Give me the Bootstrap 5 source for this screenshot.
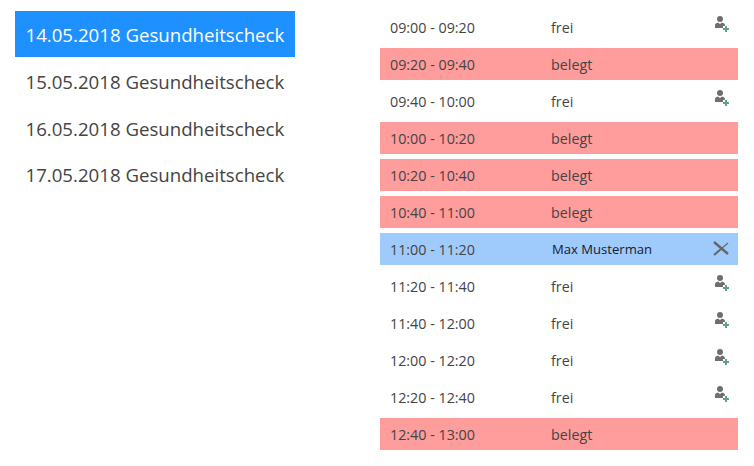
<!DOCTYPE html>
<html lang="de">
<head>
<meta charset="utf-8">
<title>Termine</title>
<link href="https://cdn.jsdelivr.net/npm/bootstrap@5.3.0/dist/css/bootstrap.min.css" rel="stylesheet">
<style>
body { font-family: "Open Sans", "Noto Sans", sans-serif; color: #444; background: #fff; }
.page-wrap { padding: 11px 16px 0 15px; gap: 85px; }
.day-col { width: 280px; flex: none; }
.day-item { height: 46.7px; padding: 2px 0 0 10.5px; font-size: 18.65px; color: #444; text-decoration: none; display: flex; align-items: center; white-space: nowrap; }
.day-item.chosen { background: #1e90ff; color: #fff; height: 46px; margin-bottom: .7px; }
.slot-col { flex: 1 1 auto; gap: 5px; }
.slot-row { height: 32px; font-size: 14.3px; line-height: 34px; position: relative; }
.slot-time { width: 171px; padding-left: 10px; flex: none; }
.slot-state { flex: 1 1 auto; }
.slot-taken { background: #ff9c9c; }
.slot-mine { background: #9fcafc; }
.slot-name { font-size: 13.1px; color: #1a1a2a; padding-left: 1px; line-height: 32px; }
.slot-icon { width: 18px; height: 18px; position: absolute; right: 7px; top: 4px; }
.slot-x { top: 7px; right: 8px; }
</style>
</head>
<body>
<svg width="0" height="0" class="d-block" aria-hidden="true">
<defs>
<symbol id="add-user" viewBox="0 0 18 18">
<circle cx="7" cy="4" r="3" fill="#6f6f6f"/>
<path d="M2 13V10.500C2 8.800 3.200 7.900 5 7.500L7 9L9 7.500C10.800 7.900 12 8.800 12 10.500V11H10V13Z" fill="#6f6f6f"/>
<path d="M12 11h2v2h2v2h-2v2h-2v-2h-2v-2h2z" fill="#5fa08e"/>
</symbol>
</defs>
</svg>
<div class="d-flex page-wrap">
  <div class="day-col">
    <a class="day-item chosen" href="#">14.05.2018 Gesundheitscheck</a>
    <a class="day-item" href="#">15.05.2018 Gesundheitscheck</a>
    <a class="day-item" href="#">16.05.2018 Gesundheitscheck</a>
    <a class="day-item" href="#">17.05.2018 Gesundheitscheck</a>
  </div>
  <div class="d-flex flex-column slot-col">
    <div class="d-flex slot-row"><span class="slot-time">09:00 - 09:20</span><span class="slot-state">frei</span><svg class="slot-icon"><use href="#add-user"/></svg></div>
    <div class="d-flex slot-row slot-taken"><span class="slot-time">09:20 - 09:40</span><span class="slot-state">belegt</span></div>
    <div class="d-flex slot-row"><span class="slot-time">09:40 - 10:00</span><span class="slot-state">frei</span><svg class="slot-icon"><use href="#add-user"/></svg></div>
    <div class="d-flex slot-row slot-taken"><span class="slot-time">10:00 - 10:20</span><span class="slot-state">belegt</span></div>
    <div class="d-flex slot-row slot-taken"><span class="slot-time">10:20 - 10:40</span><span class="slot-state">belegt</span></div>
    <div class="d-flex slot-row slot-taken"><span class="slot-time">10:40 - 11:00</span><span class="slot-state">belegt</span></div>
    <div class="d-flex slot-row slot-mine"><span class="slot-time">11:00 - 11:20</span><span class="slot-state slot-name">Max Musterman</span>
      <svg class="slot-icon slot-x" viewBox="0 0 18 18"><path d="M2 2L16 14" stroke="#666" stroke-width="2.400"/><path d="M2 15L9 9" stroke="#666" stroke-width="2.200"/><path d="M9 9L16 3" stroke="#666" stroke-width="1.100"/></svg></div>
    <div class="d-flex slot-row"><span class="slot-time">11:20 - 11:40</span><span class="slot-state">frei</span><svg class="slot-icon"><use href="#add-user"/></svg></div>
    <div class="d-flex slot-row"><span class="slot-time">11:40 - 12:00</span><span class="slot-state">frei</span><svg class="slot-icon"><use href="#add-user"/></svg></div>
    <div class="d-flex slot-row"><span class="slot-time">12:00 - 12:20</span><span class="slot-state">frei</span><svg class="slot-icon"><use href="#add-user"/></svg></div>
    <div class="d-flex slot-row"><span class="slot-time">12:20 - 12:40</span><span class="slot-state">frei</span><svg class="slot-icon"><use href="#add-user"/></svg></div>
    <div class="d-flex slot-row slot-taken"><span class="slot-time">12:40 - 13:00</span><span class="slot-state">belegt</span></div>
  </div>
</div>
<script src="https://cdn.jsdelivr.net/npm/bootstrap@5.3.0/dist/js/bootstrap.bundle.min.js"></script>
</body>
</html>
